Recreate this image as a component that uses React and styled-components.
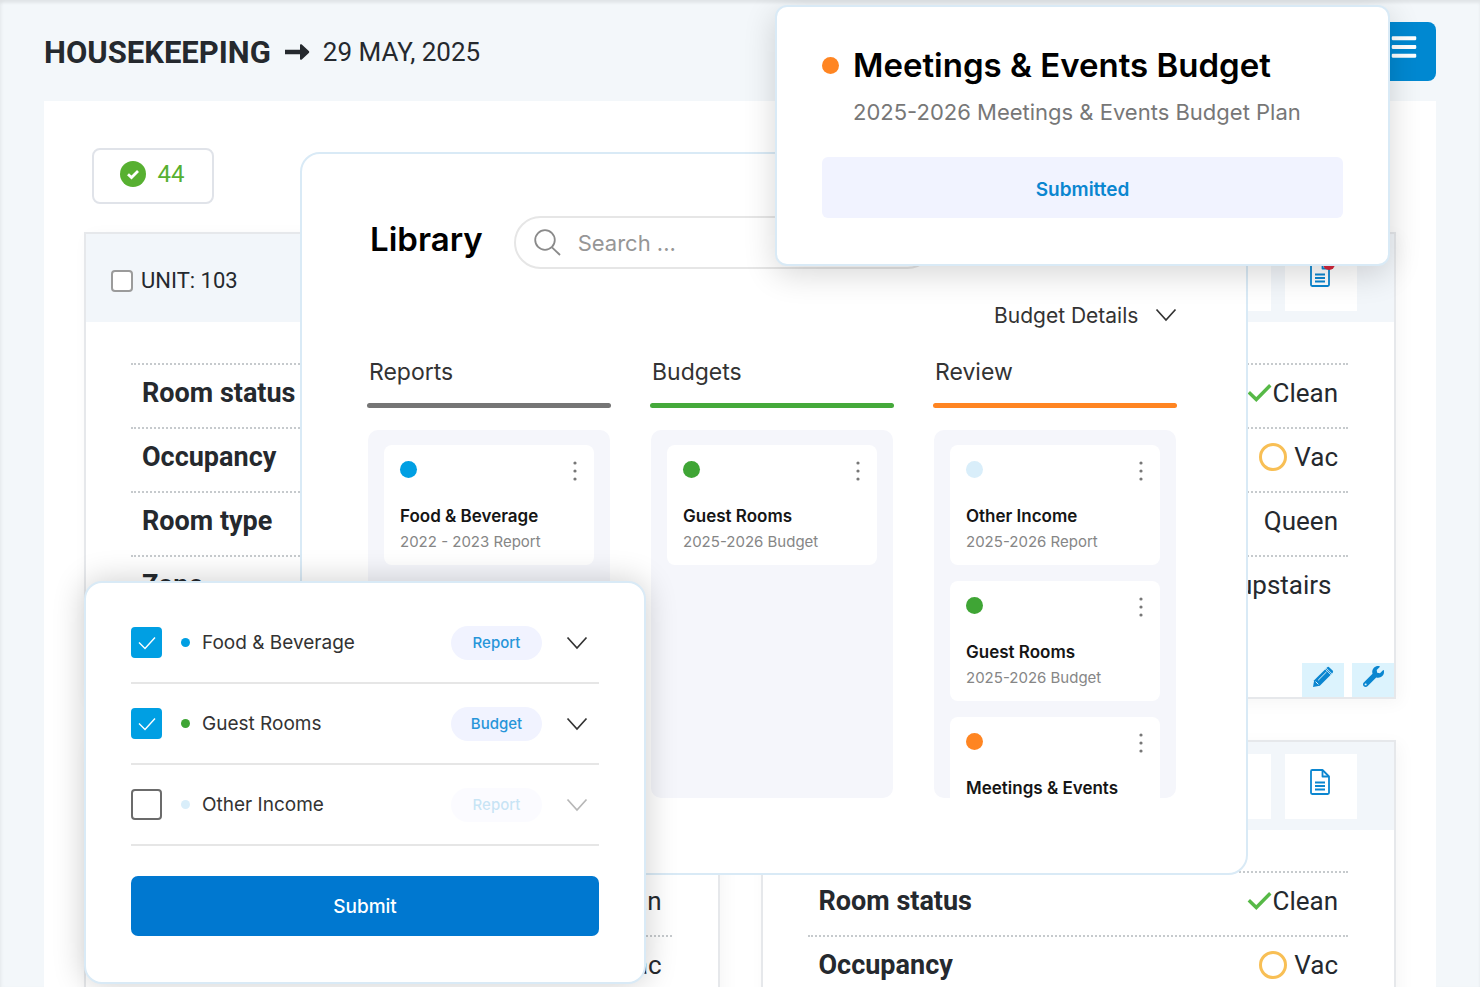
import React from "react";
import styled, { createGlobalStyle } from "styled-components";
import { FaBars, FaWrench } from "react-icons/fa";

const GlobalStyle = createGlobalStyle`
  *, *::before, *::after { box-sizing: border-box; }
  body { margin: 0; background: #f3f7fa; }
  h1, h2, h3, p, ul, dl, dd { margin: 0; padding: 0; }
  button, input, select { font: inherit; color: inherit; margin: 0; }
  button { border: 0; padding: 0; background: none; cursor: pointer; }
`;

const color = {
  ink: "#25292e",
  blue: "#009fe3",
  green: "#3fa535",
  orange: "#ff8522",
  pale: "#d9eefa",
  tint: "#f1f3ff",
  link: "#0b86d0",
};

/* Housekeeping page */

const Page = styled.div`
  position: relative;
  height: 100vh;
  min-height: 600px;
  overflow: hidden;
  padding: 0 44px;
  background: #f3f7fa;
  box-shadow: inset 0 3px 3px rgba(0, 0, 0, 0.07), inset 3px 0 3px rgba(0, 0, 0, 0.02);
  color: ${color.ink};
  font-family: Roboto, "Liberation Sans", sans-serif;
`;

const TopBar = styled.header`
  display: flex;
  align-items: center;
  height: 101px;
  padding-top: 2px;
  gap: 13px;
`;

const PageTitle = styled.h1`
  padding-top: 2px;
  font-size: 31px;
  line-height: 36px;
  font-weight: 700;
`;

const PageDate = styled.span`
  font-size: 26px;
  line-height: 36px;
`;

const MenuButton = styled.button`
  display: flex;
  justify-content: center;
  align-items: center;
  width: 64px;
  height: 59px;
  margin-left: auto;
  padding-bottom: 10px;
  border-radius: 8px;
  background: #0088d1;
  color: #fff;
`;

const Panel = styled.main`
  padding: 47px 40px 40px;
  background: #fff;
`;

const CountBadge = styled.div`
  display: flex;
  align-items: center;
  justify-content: center;
  gap: 12px;
  width: 122px;
  height: 56px;
  margin: 0 0 28px 8px;
  padding: 0 2px 4px 0;
  border: 2px solid #e0e3e9;
  border-radius: 8px;
  color: #57b031;
  font-size: 24px;
`;

const UnitGrid = styled.div`
  display: grid;
  grid-template-columns: 1fr 1fr;
  gap: 41px;
`;

const UnitBox = styled.article`
  display: flex;
  flex-direction: column;
  height: 467px;
  border: 2px solid #e6e8eb;
  box-shadow: 4px 4px 16px rgba(0, 0, 0, 0.04);
  background: #fff;
`;

const UnitHeader = styled.div`
  display: flex;
  align-items: center;
  height: 88px;
  padding: 0 37px 0 25px;
  gap: 14px;
  background: #f2f6fa;
`;

const UnitLabel = styled.label`
  display: flex;
  align-items: center;
  gap: 8px;
  margin-right: auto;
  padding-top: 5px;
  font-size: 22px;
`;

const UnitCheckbox = styled.input`
  appearance: none;
  width: 22px;
  height: 22px;
  border: 2px solid #9b9b9b;
  border-radius: 4px;
  background: #fff;
`;

const HeaderButton = styled.button`
  position: relative;
  display: flex;
  align-items: center;
  justify-content: center;
  width: 72px;
  height: 65px;
  padding: 0 2px 8px 0;
  background: #fff;
  color: ${color.link};
`;

const Alert = styled.i`
  position: absolute;
  top: 12px;
  right: 22px;
  width: 12px;
  height: 12px;
  border-radius: 50%;
  background: #d8283c;
`;

const Facts = styled.dl`
  margin: 41px 46px 0 45px;
`;

const Fact = styled.div`
  display: flex;
  align-items: center;
  justify-content: space-between;
  height: 64px;
  padding: 0 10px 6px 11px;
  border-top: 2px dotted #c6cacd;
  font-size: 26px;
`;

const FactName = styled.dt`
  font-size: 27px;
  font-weight: 700;
`;

const FactValue = styled.dd`
  display: flex;
  align-items: center;
  gap: ${(p) => p.$gap || 0}px;
`;

const VacantRing = styled.i`
  width: 28px;
  height: 28px;
  border: 3px solid #f8bf55;
  border-radius: 50%;
`;

const UnitActions = styled.div`
  display: flex;
  justify-content: flex-end;
  gap: 8px;
  margin-top: auto;
`;

const ActionButton = styled.button`
  display: flex;
  justify-content: center;
  width: 42px;
  height: 34px;
  padding-top: 3px;
  background: #dcf3fd;
  color: ${color.link};
`;

/* Floating windows */

const Floating = styled.section`
  position: absolute;
  background: #fff;
  border: 2px solid #d9eaf6;
  color: #1b1b1b;
  font-family: Inter, "Liberation Sans", sans-serif;
`;

const Dot = styled.i`
  flex: none;
  width: ${(p) => p.$size}px;
  height: ${(p) => p.$size}px;
  border-radius: 50%;
  background: ${(p) => p.$color};
`;

const LibraryWindow = styled(Floating)`
  top: 152px;
  left: 300px;
  right: 232px;
  padding: 62px 69px 75px 65px;
  border-radius: 20px;
`;

const LibraryTop = styled.div`
  display: flex;
  align-items: center;
  gap: 31px;
  padding-left: 3px;
`;

const LibraryTitle = styled.h2`
  padding-bottom: 8px;
  color: #000;
  font-size: 33px;
  line-height: 40px;
  font-weight: 600;
`;

const SearchBox = styled.label`
  display: flex;
  align-items: center;
  gap: 17px;
  width: 420px;
  height: 53px;
  padding: 0 18px;
  border: 2px solid #e6e6e6;
  border-radius: 27px;
  color: #8a8a8a;
`;

const SearchInput = styled.input`
  flex: 1;
  min-width: 0;
  padding: 0;
  border: 0;
  outline: 0;
  background: none;
  font-size: 22px;
  &::placeholder { color: #969696; opacity: 1; }
`;

const DetailsPicker = styled.div`
  display: grid;
  justify-content: end;
  align-items: center;
  margin: 28px 0 23px;
  color: #333;
  font-size: 21px;
`;

const DetailsSelect = styled.select`
  grid-area: 1 / 1;
  appearance: none;
  height: 36px;
  padding: 0 38px 0 0;
  border: 0;
  background: none;
`;

const PickerIcon = styled.span`
  display: flex;
  grid-area: 1 / 1;
  justify-self: end;
  pointer-events: none;
`;

const Board = styled.div`
  display: grid;
  grid-template-columns: repeat(3, 1fr);
  gap: 39px;
`;

const ColumnTitle = styled.h3`
  padding-left: 2px;
  color: #333;
  font-size: 23px;
  line-height: 32px;
  font-weight: 400;
`;

const ColumnRule = styled.div`
  height: 5px;
  margin: 15px 0 22px;
  border-radius: 3px;
  background: ${(p) => p.$color};
`;

const ColumnBody = styled.div`
  display: flex;
  flex-direction: column;
  gap: 16px;
  height: 368px;
  margin: 0 1px;
  padding: 15px 16px 0;
  overflow: hidden;
  border-radius: 10px;
  background: #f5f6fb;
`;

const Task = styled.article`
  flex: none;
  height: 120px;
  padding: 16px;
  border-radius: 8px;
  background: #fff;
`;

const TaskTop = styled.div`
  display: flex;
  align-items: flex-start;
  justify-content: space-between;
  height: 42px;
`;

const KebabButton = styled.button`
  display: flex;
`;

const TaskTitle = styled.h3`
  color: #151515;
  font-size: 17px;
  line-height: 26px;
  font-weight: 600;
  white-space: nowrap;
`;

const TaskNote = styled.p`
  color: #868686;
  font-size: 15px;
  line-height: 26px;
`;

const BudgetWindow = styled(Floating)`
  top: 5px;
  left: 775px;
  right: 90px;
  padding: 36px 45px 46px;
  border-radius: 12px;
  box-shadow: 0 8px 32px rgba(0, 0, 0, 0.16);
`;

const BudgetHead = styled.div`
  display: grid;
  grid-template-columns: 17px 1fr;
  column-gap: 14px;
  align-items: center;
`;

const BudgetTitle = styled.h2`
  color: #000;
  font-size: 33px;
  line-height: 44px;
  font-weight: 600;
`;

const BudgetNote = styled.p`
  grid-column: 2;
  color: #777;
  font-size: 22px;
  line-height: 50px;
`;

const StatusButton = styled.button`
  width: 100%;
  height: 61px;
  margin-top: 20px;
  padding-top: 4px;
  border-radius: 6px;
  background: ${color.tint};
  color: ${color.link};
  font-size: 19px;
  font-weight: 600;
`;

const PickerWindow = styled(Floating)`
  top: 581px;
  left: 84px;
  width: 562px;
  padding: 20px 45px 46px;
  border-radius: 18px;
  box-shadow: 0 0 32px rgba(0, 0, 0, 0.2);
`;

const PickList = styled.ul`
  list-style: none;
`;

const PickRow = styled.li`
  display: flex;
  align-items: center;
  height: 81px;
  padding-right: 11px;
  border-bottom: 2px solid #e6e6e6;
`;

const PickLabel = styled.label`
  display: flex;
  align-items: center;
  flex: 1;
  color: #333;
  font-size: 19px;
`;

const Tick = styled.span`
  display: grid;
  place-items: center;
  margin-right: 19px;
  color: #fff;
  & > * { grid-area: 1 / 1; }
  & > svg { pointer-events: none; }
`;

const TickInput = styled.input`
  appearance: none;
  width: 31px;
  height: 31px;
  border: 2px solid #6b6b6b;
  border-radius: 4px;
  background: #fff;
  &:checked { border-color: ${color.blue}; background: ${color.blue}; }
`;

const PickName = styled.span`
  margin-left: 12px;
`;

const Kind = styled.span`
  width: 91px;
  margin-right: 24px;
  border-radius: 17px;
  background: ${color.tint};
  color: #2795d9;
  font-size: 15px;
  line-height: 34px;
  font-weight: 500;
  text-align: center;
  opacity: ${(p) => (p.$faded ? 0.25 : 1)};
`;

const ExpandButton = styled.button`
  display: flex;
  color: #333;
  opacity: ${(p) => (p.$faded ? 0.35 : 1)};
`;

const SubmitButton = styled.button`
  width: 100%;
  height: 60px;
  margin-top: 30px;
  border-radius: 7px;
  background: #0078d0;
  color: #fff;
  font-size: 19px;
  font-weight: 500;
`;

const Arrow = () => (
  <svg width="26" height="18" viewBox="0 0 26 18" fill="currentColor" aria-hidden="true">
    <path d="M1 6.700H16V2.300c0-1 1-1.400 1.800-.7l7 6.400c.6.6.6 1.400 0 2l-7 6.400c-.8.7-1.800.3-1.800-.7V11.300H1Z" />
  </svg>
);

const BadgeCheck = () => (
  <svg width="26" height="26" viewBox="0 0 26 26" aria-hidden="true">
    <circle cx="13" cy="13" r="13" fill="currentColor" />
    <path d="M8 13.200 11.500 16.500 18 10" fill="none" stroke="#fff" strokeWidth="2.800" />
  </svg>
);

const CleanCheck = () => (
  <svg width="25" height="20" viewBox="0 0 25 20" fill="none" stroke="#57b947" strokeWidth="3.400" aria-hidden="true">
    <path d="M1.800 9.200 9.300 16.500 23.300 2.200" />
  </svg>
);

const NoteIcon = () => (
  <svg width="20" height="26" viewBox="0 0 20 26" fill="none" stroke="currentColor" strokeWidth="1.800" strokeLinejoin="round" aria-hidden="true">
    <path d="M1 2.200Q1 1 2.200 1H12.500L19 7.500V23.800Q19 25 17.800 25H2.200Q1 25 1 23.800Z" />
    <path d="M12.500 1V7.500H19" />
    <path d="M5 13.500H15M5 17H15M5 20.500H15" />
  </svg>
);

const PencilIcon = () => (
  <svg width="22" height="22" viewBox="0 0 22 22" aria-hidden="true">
    <path d="M1 21 2.200 14.200 14 2.400 19.600 8 7.800 19.800Z" fill="currentColor" />
    <path d="M15 1.400Q16.200.3 17.400 1.400L20.600 4.600Q21.700 5.800 20.600 7L20 7.600 14.400 2Z" fill="currentColor" />
    <path d="M6.200 14.200 14.500 5.900M3.600 15.600 6.400 18.400" fill="none" stroke="#dcf3fd" strokeWidth="1" />
    <path d="M13.200 3.200 18.800 8.800" fill="none" stroke="#dcf3fd" strokeWidth="0.800" />
  </svg>
);

const Chevron = () => (
  <svg width="22" height="14" viewBox="0 0 22 14" fill="none" stroke="currentColor" strokeWidth="1.7" aria-hidden="true">
    <path d="M1.5 1.5 11 12 20.5 1.5" />
  </svg>
);

const Magnifier = () => (
  <svg width="27" height="27" viewBox="0 0 27 27" fill="none" stroke="currentColor" strokeWidth="1.8" aria-hidden="true">
    <circle cx="11" cy="11" r="9.8" />
    <path d="M18 18.3 26 26" />
  </svg>
);

const Kebab = () => (
  <svg width="6" height="22" viewBox="0 0 6 22" fill="#777" aria-hidden="true">
    <circle cx="3" cy="2" r="1.6" />
    <circle cx="3" cy="10" r="1.6" />
    <circle cx="3" cy="18" r="1.6" />
  </svg>
);

const TickMark = () => (
  <svg width="18" height="14" viewBox="0 0 18 14" fill="none" stroke="currentColor" strokeWidth="1.4" aria-hidden="true">
    <path d="M1 6.5 7 12.5 17 1.5" />
  </svg>
);

const units = [
  { name: "103", alert: false },
  { name: "104", alert: true },
  { name: "105", alert: false },
  { name: "106", alert: false },
];

const columns = [
  {
    title: "Reports",
    color: "#757575",
    tasks: [{ title: "Food & Beverage", note: "2022 - 2023 Report", color: color.blue }],
  },
  {
    title: "Budgets",
    color: "#45a93b",
    tasks: [{ title: "Guest Rooms", note: "2025-2026 Budget", color: color.green }],
  },
  {
    title: "Review",
    color: color.orange,
    tasks: [
      { title: "Other Income", note: "2025-2026 Report", color: color.pale },
      { title: "Guest Rooms", note: "2025-2026 Budget", color: color.green },
      { title: "Meetings & Events", color: color.orange },
    ],
  },
];

const picks = [
  { name: "Food & Beverage", kind: "Report", color: color.blue, checked: true },
  { name: "Guest Rooms", kind: "Budget", color: color.green, checked: true },
  { name: "Other Income", kind: "Report", color: color.pale, checked: false },
];

function Unit({ name, alert }) {
  return (
    <UnitBox>
      <UnitHeader>
        <UnitLabel>
          <UnitCheckbox type="checkbox" />
          UNIT: {name}
        </UnitLabel>
        <HeaderButton aria-label="History" />
        <HeaderButton aria-label="Notes">
          <NoteIcon />
          {alert && <Alert />}
        </HeaderButton>
      </UnitHeader>
      <Facts>
        <Fact>
          <FactName>Room status</FactName>
          <FactValue><CleanCheck />Clean</FactValue>
        </Fact>
        <Fact>
          <FactName>Occupancy</FactName>
          <FactValue $gap={7}><VacantRing />Vac</FactValue>
        </Fact>
        <Fact>
          <FactName>Room type</FactName>
          <FactValue>Queen</FactValue>
        </Fact>
        <Fact>
          <FactName>Zone</FactName>
          <FactValue>upstairs&nbsp;</FactValue>
        </Fact>
      </Facts>
      <UnitActions>
        <ActionButton aria-label="Edit"><PencilIcon /></ActionButton>
        <ActionButton aria-label="Maintenance"><FaWrench size={21} /></ActionButton>
      </UnitActions>
    </UnitBox>
  );
}

function Library() {
  return (
    <LibraryWindow>
      <LibraryTop>
        <LibraryTitle>Library</LibraryTitle>
        <SearchBox>
          <Magnifier />
          <SearchInput type="text" placeholder="Search ..." aria-label="Search" />
        </SearchBox>
      </LibraryTop>
      <DetailsPicker>
        <DetailsSelect aria-label="Details shown">
          <option>Budget Details</option>
        </DetailsSelect>
        <PickerIcon><Chevron /></PickerIcon>
      </DetailsPicker>
      <Board>
        {columns.map((column) => (
          <div key={column.title}>
            <ColumnTitle>{column.title}</ColumnTitle>
            <ColumnRule $color={column.color} />
            <ColumnBody>
              {column.tasks.map((task) => (
                <Task key={task.title}>
                  <TaskTop>
                    <Dot $size={17} $color={task.color} />
                    <KebabButton aria-label="More"><Kebab /></KebabButton>
                  </TaskTop>
                  <TaskTitle>{task.title}</TaskTitle>
                  {task.note && <TaskNote>{task.note}</TaskNote>}
                </Task>
              ))}
            </ColumnBody>
          </div>
        ))}
      </Board>
    </LibraryWindow>
  );
}

function Picker() {
  return (
    <PickerWindow>
      <PickList>
        {picks.map((pick) => (
          <PickRow key={pick.name}>
            <PickLabel>
              <Tick>
                <TickInput type="checkbox" defaultChecked={pick.checked} />
                <TickMark />
              </Tick>
              <Dot $size={9} $color={pick.color} />
              <PickName>{pick.name}</PickName>
            </PickLabel>
            <Kind $faded={!pick.checked}>{pick.kind}</Kind>
            <ExpandButton aria-label={`Expand ${pick.name}`} $faded={!pick.checked}>
              <Chevron />
            </ExpandButton>
          </PickRow>
        ))}
      </PickList>
      <SubmitButton>Submit</SubmitButton>
    </PickerWindow>
  );
}

export default function App() {
  return (
    <Page>
      <GlobalStyle />
      <TopBar>
        <PageTitle>HOUSEKEEPING</PageTitle>
        <Arrow />
        <PageDate>29 MAY, 2025</PageDate>
        <MenuButton aria-label="Menu"><FaBars size={28} /></MenuButton>
      </TopBar>
      <Panel>
        <CountBadge><BadgeCheck />44</CountBadge>
        <UnitGrid>
          {units.map((unit) => <Unit key={unit.name} {...unit} />)}
        </UnitGrid>
      </Panel>
      <Library />
      <BudgetWindow>
        <BudgetHead>
          <Dot $size={17} $color={color.orange} />
          <BudgetTitle>Meetings &amp; Events Budget</BudgetTitle>
          <BudgetNote>2025-2026 Meetings &amp; Events Budget Plan</BudgetNote>
        </BudgetHead>
        <StatusButton>Submitted</StatusButton>
      </BudgetWindow>
      <Picker />
    </Page>
  );
}
